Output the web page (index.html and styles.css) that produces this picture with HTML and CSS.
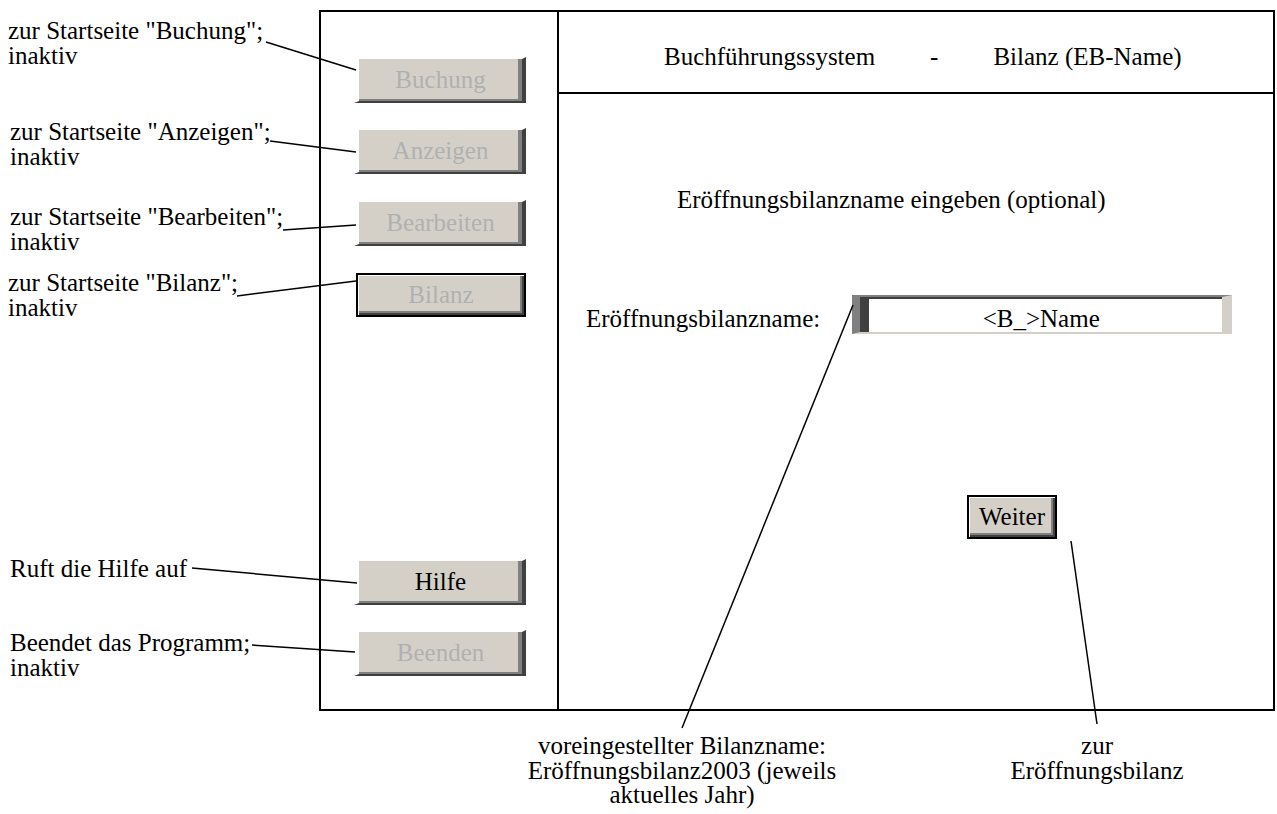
FILE: index.html
```html
<!DOCTYPE html>
<html lang="de">
<head>
<meta charset="utf-8">
<title>Buchführungssystem - Bilanz (EB-Name)</title>
<link rel="stylesheet" href="styles.css">
</head>
<body>
<div class="canvas">
  <div class="frame">
    <div class="nav">
      <div class="btn b1">Buchung</div>
      <div class="btn b2">Anzeigen</div>
      <div class="btn b3">Bearbeiten</div>
      <div class="btn focus b4">Bilanz</div>
      <div class="btn on b5">Hilfe</div>
      <div class="btn b6">Beenden</div>
    </div>
    <div class="main">
      <div class="header">
        <span>Buchführungssystem</span>
        <span>-</span>
        <span>Bilanz (EB-Name)</span>
      </div>
      <div class="title">Eröffnungsbilanzname eingeben (optional)</div>
      <div class="row">
        <span class="label">Eröffnungsbilanzname:</span>
        <div class="field">&lt;B_&gt;Name</div>
      </div>
      <div class="btn focus on weiter">Weiter</div>
    </div>
  </div>

  <div class="note n1">zur Startseite "Buchung";<br>inaktiv</div>
  <div class="note n2">zur Startseite "Anzeigen";<br>inaktiv</div>
  <div class="note n3">zur Startseite "Bearbeiten";<br>inaktiv</div>
  <div class="note n4">zur Startseite "Bilanz";<br>inaktiv</div>
  <div class="note n5">Ruft die Hilfe auf</div>
  <div class="note n6">Beendet das Programm;<br>inaktiv</div>
  <div class="note center n7">voreingestellter Bilanzname:<br>Eröffnungsbilanz2003 (jeweils<br>aktuelles Jahr)</div>
  <div class="note center n8">zur<br>Eröffnungsbilanz</div>

  <svg class="leaders" width="1277" height="814" viewBox="0 0 1277 814">
    <g stroke="#000" stroke-width="1.5" fill="none">
      <line x1="266" y1="42" x2="356" y2="70"/>
      <line x1="270" y1="141" x2="356" y2="152"/>
      <line x1="283" y1="230" x2="356" y2="225"/>
      <line x1="237" y1="296" x2="356" y2="281"/>
      <line x1="192" y1="568" x2="357" y2="583"/>
      <line x1="252" y1="645" x2="355" y2="652"/>
      <line x1="853" y1="305" x2="682" y2="728"/>
      <line x1="1071" y1="541" x2="1097" y2="724"/>
    </g>
  </svg>
</div>
</body>
</html>
```
FILE: styles.css
```css
html, body {
  margin: 0;
  padding: 0;
  background: #fff;
}

body {
  font-family: "Liberation Serif", "Times New Roman", Times, serif;
  font-size: 25px;
  line-height: 28.75px;
  color: #000;
}

.canvas {
  position: relative;
  width: 1277px;
  height: 814px;
  overflow: hidden;
}

.frame {
  box-sizing: border-box;
  margin: 10px 0 0 319px;
  width: 956px;
  height: 701px;
  border: 2px solid #000;
  display: flex;
}

.nav {
  box-sizing: border-box;
  width: 238px;
  border-right: 2px solid #000;
  display: flex;
  flex-direction: column;
  align-items: flex-start;
  padding: 45px 0 33px 33px;
}

.btn {
  box-sizing: border-box;
  width: 172px;
  height: 46px;
  background: #d4d0c8;
  border-style: solid;
  border-width: 2px 4px 2px 5px;
  border-color: #fff #404040 #404040 #fff;
  box-shadow: inset -4px -2px 0 #808080;
  color: #b0b0b0;
  display: flex;
  align-items: center;
  justify-content: center;
  white-space: nowrap;
}

.btn.on {
  color: #000;
}

.btn.focus {
  border: 2px solid #000;
  box-shadow: inset 1px 1px 0 #fff, inset -2px -2px 0 #404040, inset -4px -4px 0 #808080;
}

.b2 { margin-top: 25px; }
.b3 { margin-top: 26px; }
.b4 {
  margin-top: 27px;
  margin-left: 2px;
  width: 170px;
  height: 44px;
}
.b5 { margin-top: auto; }
.b6 { margin-top: 25px; }

.main {
  flex: 1;
  display: flex;
  flex-direction: column;
  align-items: flex-start;
}

.header {
  box-sizing: border-box;
  align-self: stretch;
  height: 82px;
  border-bottom: 2px solid #000;
  padding: 31px 0 0 105px;
  display: flex;
  gap: 55px;
}

.title {
  margin-top: 92px;
  padding-left: 118px;
}

.row {
  margin-top: 80px;
  padding-left: 27px;
  display: flex;
  align-items: baseline;
}

.field {
  box-sizing: border-box;
  margin-left: 32px;
  width: 380px;
  height: 39px;
  background: #fff;
  border-style: solid;
  border-width: 2px 10px 2px 8px;
  border-color: #808080 #d4d0c8 #d4d0c8 #808080;
  box-shadow: inset 9px 2px 0 #404040;
  padding-top: 8px;
  line-height: 27px;
  text-align: center;
  white-space: nowrap;
}

.weiter {
  margin-top: 161px;
  margin-left: 408px;
  width: 90px;
  height: 44px;
  padding-top: 2px;
}

.note {
  position: absolute;
  line-height: 24.5px;
  white-space: nowrap;
}

.note.center {
  text-align: center;
}

.n1 { left: 8px; top: 19px; }
.n2 { left: 10px; top: 120px; }
.n3 { left: 10px; top: 205px; }
.n4 { left: 8px; top: 271px; }
.n5 { left: 10px; top: 557px; }
.n6 { left: 10px; top: 631px; }
.n7 { left: 482px; top: 734px; width: 400px; }
.n8 { left: 997px; top: 734px; width: 200px; }

.leaders {
  position: absolute;
  left: 0;
  top: 0;
  pointer-events: none;
}
```
